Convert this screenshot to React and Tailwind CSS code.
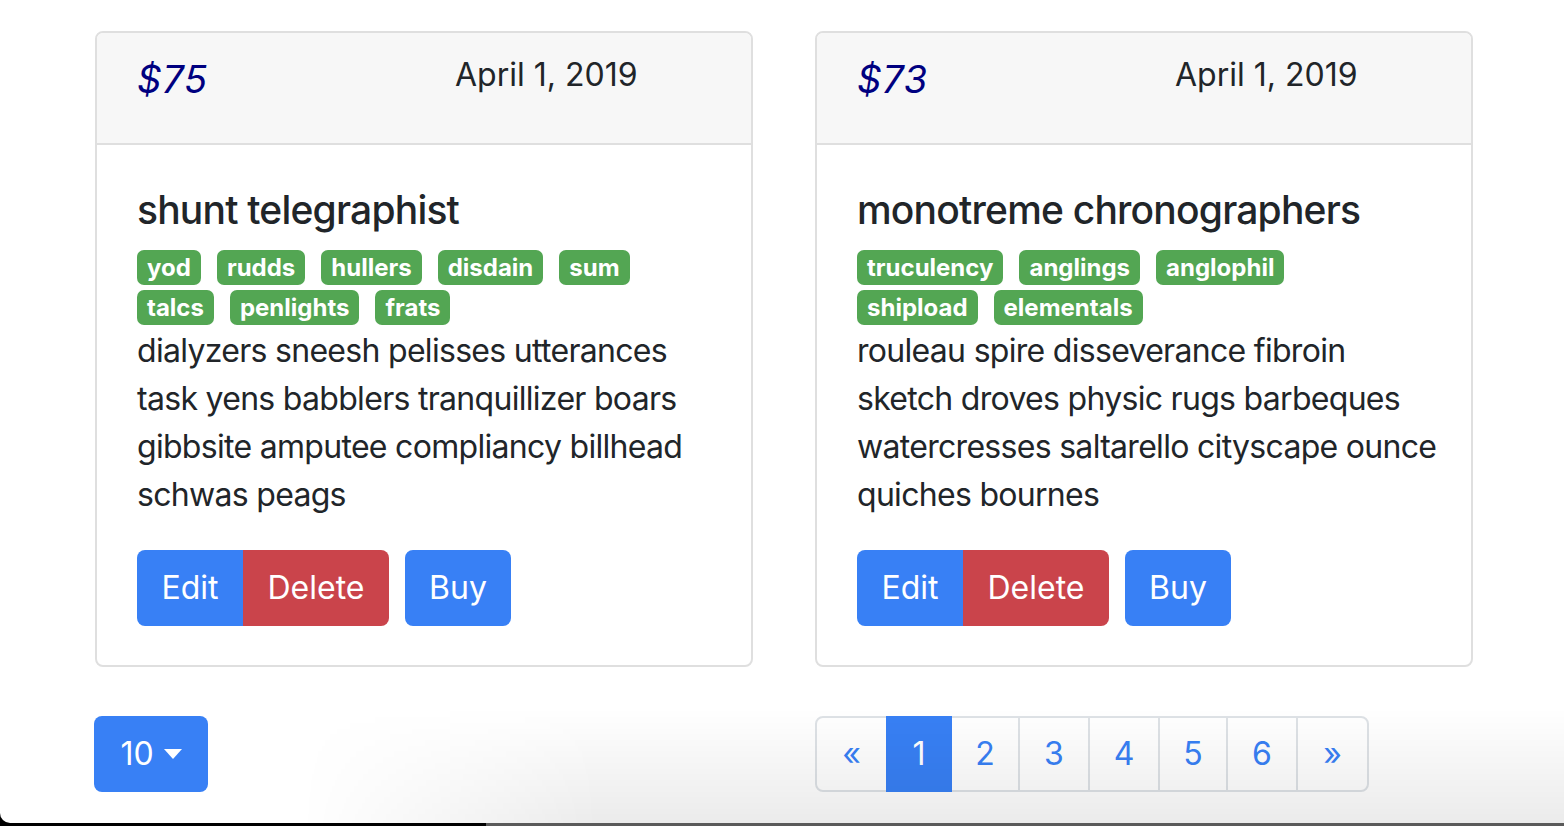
import React from "react";

const cards = [
  {
    price: "$75",
    title: "shunt telegraphist",
    badges: [["yod", "rudds", "hullers", "disdain", "sum"], ["talcs", "penlights", "frats"]],
    lines: [
      "dialyzers sneesh pelisses utterances",
      "task yens babblers tranquillizer boars",
      "gibbsite amputee compliancy billhead",
      "schwas peags",
    ],
  },
  {
    price: "$73",
    title: "monotreme chronographers",
    badges: [["truculency", "anglings", "anglophil"], ["shipload", "elementals"]],
    lines: [
      "rouleau spire disseverance fibroin",
      "sketch droves physic rugs barbeques",
      "watercresses saltarello cityscape ounce",
      "quiches bournes",
    ],
  },
];

function Card({ c }) {
  return (
    <div className="w-[658px] border-2 border-[#dfdfdf] rounded-[8px] overflow-hidden bg-white">
      <div className="h-[112px] bg-[#f7f7f7] border-b-2 border-[#dfdfdf] px-[40px] pt-[18px] flex items-start">
        <div className="w-[318px] pt-[4px] text-[38px] leading-[48px] italic tracking-[0.8px] text-[#000080]">{c.price}</div>
        <div className="text-[32px] leading-[48px] text-[#212529]">April 1, 2019</div>
      </div>
      <div className="px-[40px] pt-[41px] pb-[39px] text-[#212529]">
        <div className="text-[39px] leading-[48px] font-medium tracking-[-0.8px] mb-[16px] whitespace-nowrap">{c.title}</div>
        <div className="flex flex-col gap-[5px]">
          {c.badges.map((row, i) => (
            <div key={i} className="flex gap-[16px]">
              {row.map((b) => (
                <span key={b} className="h-[35px] px-[10px] rounded-[7px] bg-[#53a653] text-white text-[24px] font-bold leading-[35px]">
                  {b}
                </span>
              ))}
            </div>
          ))}
        </div>
        <div className="mt-[2px] text-[32px] leading-[48px] tracking-[-0.7px]">
          {c.lines.map((l) => (
            <div key={l} className="whitespace-nowrap">{l}</div>
          ))}
        </div>
        <div className="mt-[31px] flex gap-[16px]">
          <div className="flex">
            <button className="w-[106px] h-[76px] bg-[#3880f5] rounded-l-[8px] text-white text-[32px]">Edit</button>
            <button className="w-[146px] h-[76px] bg-[#ca444b] rounded-r-[8px] text-white text-[32px]">Delete</button>
          </div>
          <button className="w-[106px] h-[76px] bg-[#3880f5] rounded-[8px] text-white text-[32px]">Buy</button>
        </div>
      </div>
    </div>
  );
}

const pages = [
  { t: "«", w: "w-[73px]", cls: "rounded-l-[8px]" },
  { t: "1", w: "w-[66px]", active: true },
  { t: "2", w: "w-[70px]" },
  { t: "3", w: "w-[72px]" },
  { t: "4", w: "w-[72px]" },
  { t: "5", w: "w-[70px]" },
  { t: "6", w: "w-[72px]" },
  { t: "»", w: "w-[73px]", cls: "rounded-r-[8px]" },
];

export default function App() {
  return (
    <div className="w-[1564px] h-[826px] bg-black relative overflow-hidden flex flex-col font-['Inter',sans-serif]">
      <div className="h-[823px] bg-white rounded-bl-[10px] pl-[95px] pt-[31px]">
        <div className="flex gap-[62px]">
          {cards.map((c) => (
            <Card key={c.price} c={c} />
          ))}
        </div>
        <div className="mt-[49px] flex gap-[62px]">
          <div className="w-[658px]">
            <button className="-ml-[1px] w-[114px] h-[76px] bg-[#3880f5] rounded-[8px] text-white text-[32px] flex items-center justify-center">
              <span>10</span>
              <span className="ml-[10px] w-0 h-0 border-l-[9px] border-r-[9px] border-t-[10px] border-l-transparent border-r-transparent border-t-white"></span>
            </button>
          </div>
          <div className="flex h-[76px]">
            {pages.map((p, i) => (
              <div
                key={p.t}
                className={`${p.w} ${i > 0 ? "-ml-[2px]" : ""} ${p.cls || ""} h-[76px] border-2 flex items-center justify-center text-[32px] ${
                  p.active ? "bg-[#3880f5] border-[#3880f5] text-white relative" : "bg-white border-[#dee2e6] text-[#3880f5]"
                }`}
              >
                {p.t}
              </div>
            ))}
          </div>
        </div>
      </div>
      <div className="h-[3px] flex">
        <div className="w-[486px] bg-black"></div>
        <div className="flex-1 bg-[#5a5a5a]"></div>
      </div>
      <div className="absolute left-[300px] top-[680px] right-0 h-[143px] pointer-events-none bg-[linear-gradient(to_bottom,rgba(0,0,0,0)_20%,rgba(0,0,0,0.08))] [mask-image:linear-gradient(to_right,transparent,black_300px)]"></div>
    </div>
  );
}
